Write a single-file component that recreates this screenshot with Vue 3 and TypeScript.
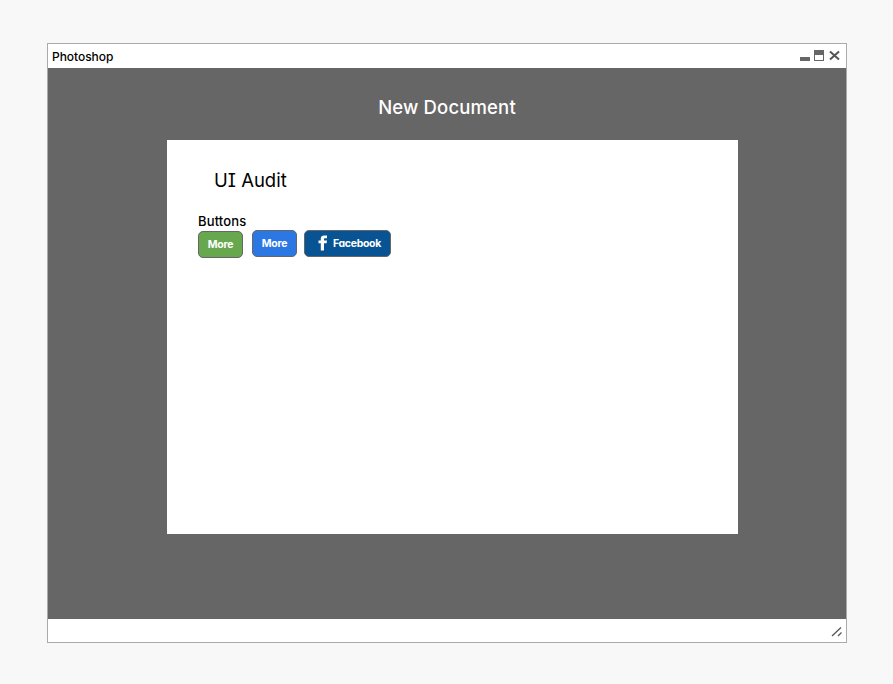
<script setup lang="ts">
interface AuditButton {
  label: string
  kind: 'green' | 'blue' | 'facebook'
}

const buttons: AuditButton[] = [
  { label: 'More', kind: 'green' },
  { label: 'More', kind: 'blue' },
  { label: 'Facebook', kind: 'facebook' },
]
</script>

<template>
  <main class="page">
    <section class="window">
      <header class="titlebar">
        <span class="title">Photoshop</span>
        <svg class="controls" width="42" height="14" viewBox="0 0 42 14">
          <rect x="1" y="8" width="10" height="4" fill="#666" />
          <rect x="15.5" y="1.5" width="9" height="10" fill="#fff" stroke="#666" />
          <rect x="15" y="1" width="10" height="5" fill="#666" />
          <path d="M31 2.500 40 10.500M40 2.500 31 10.500" stroke="#555" stroke-width="2" />
        </svg>
      </header>
      <div class="workspace">
        <h1 class="heading">New Document</h1>
        <div class="canvas">
          <h2 class="audit">UI Audit</h2>
          <p class="label">Buttons</p>
          <div class="buttons">
            <button v-for="b in buttons" :key="b.kind" class="btn" :class="b.kind">
              <svg v-if="b.kind === 'facebook'" class="fb" width="10" height="16" viewBox="0 0 10 16">
                <path
                  d="M2.8 15.5V8.3H.5V5.4h2.3V3.8C2.8 1.5 4.1.5 6.3.5H9v2.8H7.2C6.2 3.300 6 3.700 6 4.500v.9h3l-.4 2.900H6v7.200Z"
                  fill="#fff"
                />
              </svg>
              <span class="text">{{ b.label }}</span>
            </button>
          </div>
        </div>
      </div>
      <footer class="statusbar">
        <svg width="12" height="12" viewBox="0 0 12 12">
          <path d="M1 10 10 1.500M7 10l3.500-3.500" stroke="#555" stroke-width="1.300" fill="none" />
        </svg>
      </footer>
    </section>
  </main>
</template>

<style>
body {
  background: #f8f8f8;
}
</style>

<style scoped>
.page {
  box-sizing: border-box;
  width: 893px;
  height: 684px;
  padding: 43px 46px 41px 47px;
  background: #f8f8f8;
  font-family: Inter, "Liberation Sans", sans-serif;
  font-feature-settings: "cv08", "cv11";
  color: #000;
}
.window {
  box-sizing: border-box;
  display: flex;
  flex-direction: column;
  width: 800px;
  height: 600px;
  border: 1px solid #aaa;
  background: #fff;
}
.titlebar {
  display: flex;
  justify-content: space-between;
  align-items: center;
  height: 24px;
  padding: 0 5px 0 4px;
}
.title {
  padding-top: 2px;
  font-size: 12px;
  line-height: 22px;
  font-weight: 450;
  letter-spacing: -0.05px;
}
.workspace {
  display: flex;
  flex-direction: column;
  height: 551px;
  background: #666;
}
.heading {
  margin: 0;
  padding: 25px 0 19px;
  font-size: 18.5px;
  line-height: 28px;
  font-weight: 500;
  letter-spacing: 0.15px;
  text-align: center;
  color: #fff;
}
.canvas {
  box-sizing: border-box;
  width: 571px;
  height: 394px;
  margin-left: 119px;
  padding: 26px 31px;
  background: #fff;
}
.audit {
  margin: 0;
  padding-left: 16px;
  font-size: 18.5px;
  line-height: 28px;
  font-weight: 400;
}
.label {
  margin: 18px 0 -1px;
  font-size: 13px;
  line-height: 19px;
  font-weight: 500;
  letter-spacing: 0.15px;
}
.buttons {
  display: flex;
}
.btn {
  box-sizing: border-box;
  display: flex;
  align-items: center;
  justify-content: center;
  height: 27px;
  padding: 0;
  border: 1px solid #666;
  border-radius: 5px;
  color: #fff;
  font: 700 10.5px/25px Inter, "Liberation Sans", sans-serif;
  font-feature-settings: "cv11";
  letter-spacing: -0.3px;
}
.green {
  width: 45px;
  margin: 1px 9px 0 0;
  background: #67a74e;
}
.blue {
  width: 45px;
  margin-right: 7px;
  background: #2b78e4;
}
.facebook {
  width: 87px;
  padding-left: 3px;
  background: #085394;
}
.fb {
  margin: -1px 5px 0 1px;
}
.statusbar {
  display: flex;
  justify-content: flex-end;
  align-items: center;
  height: 23px;
  padding: 3px 3px 0 0;
  box-sizing: border-box;
}
</style>
